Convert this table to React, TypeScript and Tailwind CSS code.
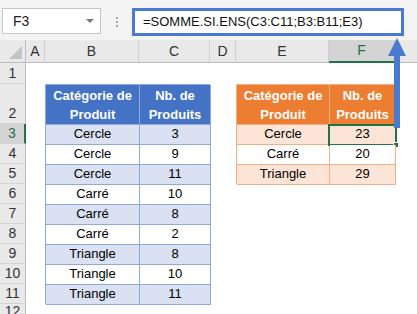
import { Fragment } from 'react'

const blueRows = [
  ['Cercle', '3'],
  ['Cercle', '9'],
  ['Cercle', '11'],
  ['Carré', '10'],
  ['Carré', '8'],
  ['Carré', '2'],
  ['Triangle', '8'],
  ['Triangle', '10'],
  ['Triangle', '11'],
]

const orangeRows = [
  ['Cercle', '23'],
  ['Carré', '20'],
  ['Triangle', '29'],
]

const columns = ['A', 'B', 'C', 'D', 'E', 'F']
const rowNumbers = ['1', '2', '3', '4', '5', '6', '7', '8', '9', '10', '11', '12']

const FormulaArrow = () => (
  <svg className="absolute left-[386px] top-[38px]" width="22" height="92" viewBox="0 0 22 92">
    <rect x="8" y="14" width="6" height="76" fill="#4a7ad0" />
    <polygon points="11,0 2,18 20,18" fill="#4a7ad0" />
  </svg>
)

const App = () => {
  return (
    <div className="relative w-[417px] h-[314px] overflow-hidden bg-white font-['Liberation_Sans',Arial,sans-serif] text-[13px] text-black">
      {/* Name box + formula bar */}
      <div className="h-[40px] bg-[#f3f3f3] flex items-start pt-[8px]">
        <div className="ml-[2px] w-[99px] h-[26px] bg-white border border-[#c6c6c6] flex items-center pl-[10px] pr-[6px] text-[14px] text-[#222]">
          <span className="flex-1">F3</span>
          <span className="w-0 h-0 border-l-[4px] border-r-[4px] border-t-[4px] border-l-transparent border-r-transparent border-t-[#777]" />
        </div>
        <div className="w-[31px] flex flex-col items-center gap-[2px] pt-[9px]">
          <span className="w-[2px] h-[2px] bg-[#aaa]" />
          <span className="w-[2px] h-[2px] bg-[#aaa]" />
          <span className="w-[2px] h-[2px] bg-[#aaa]" />
        </div>
        <div className="w-[272px] h-[28px] bg-white border-[3px] border-[#4a7ad0] flex items-center pl-[8px] text-[13px] text-[#111]">
          =SOMME.SI.ENS(C3:C11;B3:B11;E3)
        </div>
      </div>

      {/* Sheet grid */}
      <div className="grid grid-cols-[26px_19px_94px_71px_26px_93px_66px_1fr] grid-rows-[23px_21px_40px_repeat(9,20px)_1fr] h-[274px]">
        {/* select-all corner */}
        <div className="col-start-1 row-start-1 bg-[#e9e9e9] border-r border-b border-[#bdbdbd] flex items-end justify-end p-[3px]">
          <svg width="13" height="13" viewBox="0 0 13 13">
            <polygon points="13,0 13,13 0,13" fill="#c4c4c4" />
          </svg>
        </div>
        {columns.map((c, i) => (
          <div
            key={c}
            className={`row-start-1 flex items-center justify-center text-[14px] border-r border-[#cfcfcf] ${
              c === 'F'
                ? 'bg-[#d4d4d4] text-[#217346] border-b-2 border-b-[#217346]'
                : 'bg-[#e9e9e9] text-[#333] border-b border-b-[#bdbdbd]'
            }`}
            style={{ gridColumnStart: i + 2 }}
          >
            {c}
          </div>
        ))}
        <div className="row-start-1 col-start-8 bg-[#e9e9e9] border-b border-[#bdbdbd]" />

        {/* row headers */}
        {rowNumbers.map((n, i) => (
          <div
            key={n}
            className={`col-start-1 flex items-end justify-center pb-[1px] text-[14px] leading-none border-b border-[#d4d4d4] ${
              n === '3'
                ? 'bg-[#d4d4d4] text-[#217346] border-r-2 border-r-[#217346]'
                : 'bg-[#e9e9e9] text-[#333] border-r border-r-[#bdbdbd]'
            }`}
            style={{ gridRowStart: i + 2 }}
          >
            <span className="pb-[2px]">{n}</span>
          </div>
        ))}

        {/* blue table B2:C11 */}
        <div className="col-start-3 col-span-2 row-start-3 row-span-10 grid grid-cols-[94px_71px] grid-rows-[40px_repeat(9,20px)] border-l border-t border-[#8ea9db]">
          <div className="bg-[#4472c4] text-white font-bold flex items-center justify-center text-center leading-[19px] border-r border-b border-[#8ea9db]">
            Catégorie de<br />Produit
          </div>
          <div className="bg-[#4472c4] text-white font-bold flex items-center justify-center text-center leading-[19px] border-r border-b border-[#8ea9db]">
            Nb. de<br />Produits
          </div>
          {blueRows.map(([cat, nb], i) => (
            <Fragment key={i}>
              <div className={`${i % 2 === 0 ? 'bg-[#d9e1f2]' : 'bg-white'} flex items-end justify-center pb-[1px] border-r border-b border-[#8ea9db]`}>
                {cat}
              </div>
              <div className={`${i % 2 === 0 ? 'bg-[#d9e1f2]' : 'bg-white'} flex items-end justify-center pb-[1px] border-r border-b border-[#8ea9db]`}>
                {nb}
              </div>
            </Fragment>
          ))}
        </div>

        {/* orange table E2:F5 */}
        <div className="col-start-6 col-span-2 row-start-3 row-span-4 grid grid-cols-[93px_66px] grid-rows-[40px_repeat(3,20px)] border-l border-t border-[#f4b084]">
          <div className="bg-[#ed7d31] text-white font-bold flex items-center justify-center text-center leading-[19px] border-r border-b border-[#f4b084]">
            Catégorie de<br />Produit
          </div>
          <div className="bg-[#ed7d31] text-white font-bold flex items-center justify-center text-center leading-[19px] border-r border-b border-[#f4b084]">
            Nb. de<br />Produits
          </div>
          {orangeRows.map(([cat, nb], i) => (
            <Fragment key={i}>
              <div className={`${i % 2 === 0 ? 'bg-[#fce4d6]' : 'bg-white'} flex items-end justify-center pb-[1px] border-r border-b border-[#f4b084]`}>
                {cat}
              </div>
              <div
                className={`relative ${i % 2 === 0 ? 'bg-[#fce4d6]' : 'bg-white'} flex items-end justify-center pb-[1px] border-r border-b border-[#f4b084]`}
              >
                {nb}
                {i === 0 && (
                  <>
                    <span className="absolute -left-[2px] -top-[1px] -right-[2px] -bottom-[2px] border-2 border-[#217346]" />
                    <span className="absolute -right-[4px] -bottom-[4px] w-[6px] h-[6px] bg-[#217346] border border-white" />
                  </>
                )}
              </div>
            </Fragment>
          ))}
        </div>
      </div>

      <FormulaArrow />
    </div>
  )
}

export default App
